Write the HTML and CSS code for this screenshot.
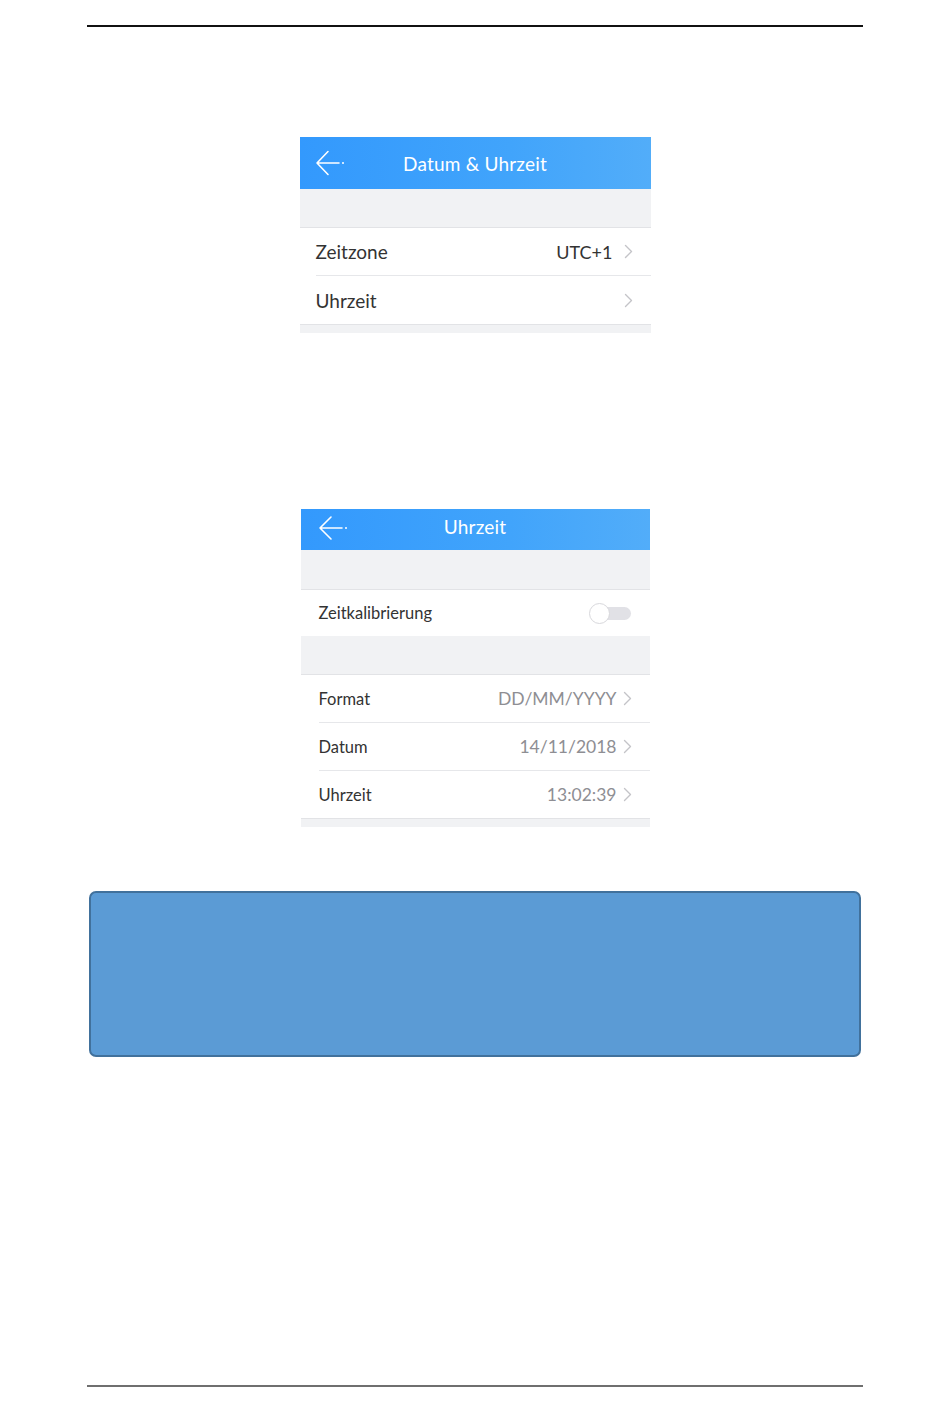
FILE: index.html
```html
<!DOCTYPE html>
<html lang="de">
<head>
<meta charset="UTF-8">
<meta name="viewport" content="width=device-width, initial-scale=1.0">
<title>Datum &amp; Uhrzeit</title>
<link rel="stylesheet" href="styles.css">
</head>
<body>

<div class="page">
    <hr class="rule rule-top">

    <!-- Screen 1: Datum & Uhrzeit -->
    <div class="phone phone-one">
        <div class="app-bar">
            <svg class="back" width="30" height="26" viewBox="0 0 30 26">
                <path d="M13 1.5 L2 13 L13 24.5 M2 13 L24 13" fill="none" stroke="#fff" stroke-width="1.6" stroke-linecap="round" stroke-linejoin="round"/>
                <circle cx="28" cy="13" r="1" fill="#fff"/>
            </svg>
            <span class="app-title">Datum &amp; Uhrzeit</span>
        </div>
        <div class="gap"></div>
        <ul class="list">
            <li class="row">
                <span class="label">Zeitzone</span>
                <span class="value dark">UTC+1</span>
                <svg class="chev" width="9" height="15" viewBox="0 0 9 15"><path d="M1.5 1.5 L7.5 7.5 L1.5 13.5" fill="none" stroke="#c4c4c8" stroke-width="1.4" stroke-linecap="round" stroke-linejoin="round"/></svg>
            </li>
            <li class="row">
                <span class="label">Uhrzeit</span>
                <svg class="chev" width="9" height="15" viewBox="0 0 9 15"><path d="M1.5 1.5 L7.5 7.5 L1.5 13.5" fill="none" stroke="#c4c4c8" stroke-width="1.4" stroke-linecap="round" stroke-linejoin="round"/></svg>
            </li>
        </ul>
        <div class="gap gap-end"></div>
    </div>

    <!-- Screen 2: Uhrzeit -->
    <div class="phone phone-two">
        <div class="app-bar">
            <svg class="back" width="30" height="26" viewBox="0 0 30 26">
                <path d="M13 2 L2 13 L13 24 M2 13 L24 13" fill="none" stroke="#fff" stroke-width="1.6" stroke-linecap="round" stroke-linejoin="round"/>
                <circle cx="28" cy="13" r="1" fill="#fff"/>
            </svg>
            <span class="app-title">Uhrzeit</span>
        </div>
        <div class="gap"></div>
        <ul class="list">
            <li class="row row-switch">
                <span class="label">Zeitkalibrierung</span>
                <span class="toggle"><span class="knob"></span></span>
            </li>
        </ul>
        <div class="gap"></div>
        <ul class="list">
            <li class="row">
                <span class="label">Format</span>
                <span class="value">DD/MM/YYYY</span>
                <svg class="chev" width="9" height="15" viewBox="0 0 9 15"><path d="M1.5 1.5 L7.5 7.5 L1.5 13.5" fill="none" stroke="#c4c4c8" stroke-width="1.4" stroke-linecap="round" stroke-linejoin="round"/></svg>
            </li>
            <li class="row">
                <span class="label">Datum</span>
                <span class="value">14/11/2018</span>
                <svg class="chev" width="9" height="15" viewBox="0 0 9 15"><path d="M1.5 1.5 L7.5 7.5 L1.5 13.5" fill="none" stroke="#c4c4c8" stroke-width="1.4" stroke-linecap="round" stroke-linejoin="round"/></svg>
            </li>
            <li class="row">
                <span class="label">Uhrzeit</span>
                <span class="value">13:02:39</span>
                <svg class="chev" width="9" height="15" viewBox="0 0 9 15"><path d="M1.5 1.5 L7.5 7.5 L1.5 13.5" fill="none" stroke="#c4c4c8" stroke-width="1.4" stroke-linecap="round" stroke-linejoin="round"/></svg>
            </li>
        </ul>
        <div class="gap gap-end"></div>
    </div>

    <div class="note-box"></div>

    <hr class="rule rule-bottom">
</div>

</body>
</html>
```

FILE: styles.css
```css
body {
    margin: 0;
    padding: 0;
    background-color: #fff;
    font-family: 'Lato', 'Noto Sans', sans-serif;
    color: #333;
}

.page {
    width: 950px;
    height: 1408px;
    padding-top: 25px;
    box-sizing: border-box;
    display: flex;
    flex-direction: column;
    align-items: center;
}

.rule {
    width: 776px;
    margin: 0;
    border: none;
    height: 2px;
}

.rule-top {
    background-color: #111;
}

.rule-bottom {
    margin-top: auto;
    margin-bottom: 21px;
    background-color: #6f6f6f;
}

/* phone screens */
.phone {
    background-color: #fff;
}

.phone-one {
    width: 351px;
    margin-top: 110px;
}

.phone-two {
    width: 349px;
    margin-top: 176px;
}

.app-bar {
    display: flex;
    align-items: center;
    justify-content: center;
    position: relative;
    background: linear-gradient(90deg, #3399fd 0%, #41a4fb 60%, #52adf9 100%);
    color: #fff;
}

.phone-one .app-bar {
    height: 52px;
}

.phone-two .app-bar {
    height: 41px;
}

.back {
    position: absolute;
    left: 15px;
    top: 50%;
    margin-top: -13px;
}

.phone-two .back {
    left: 17px;
    margin-top: -15px;
}

.phone-two .app-title {
    margin-top: -6px;
}

.app-title {
    font-size: 19px;
    letter-spacing: 0.2px;
}

.gap {
    height: 38px;
    background-color: #f1f2f4;
    border-bottom: 1px solid #e2e3e6;
}

.phone-two .app-bar + .gap {
    height: 39px;
}

.gap-end {
    height: 8px;
    border-bottom: none;
    border-top: 1px solid #e2e3e6;
}

.list {
    list-style-type: none;
    margin: 0;
    padding: 0;
}

.row {
    display: flex;
    align-items: center;
    height: 47px;
    margin-left: 16px;
    padding-right: 18px;
    border-bottom: 1px solid #e6e7ea;
}

.row:last-child {
    border-bottom: none;
    height: 48px;
}

.label {
    font-size: 19px;
    color: #333;
}

.phone-two .row {
    margin-left: 18px;
    height: 47px;
}

.phone-two .row-switch {
    height: 46px;
}

.phone-two .label {
    font-size: 16.5px;
}

.value {
    margin-left: auto;
    font-size: 17.5px;
    color: #8e8e93;
}

.value.dark {
    font-size: 18px;
    color: #333;
}

.chev {
    margin-left: 6px;
}

.phone-one .value + .chev {
    margin-left: 11px;
}

.row .label + .chev {
    margin-left: auto;
}

/* switch */
.toggle {
    margin-left: auto;
    margin-right: 1px;
    width: 40px;
    height: 13px;
    border-radius: 7px;
    background-color: #e1e1e6;
    position: relative;
}

.knob {
    position: absolute;
    left: -2px;
    top: -4px;
    width: 19px;
    height: 19px;
    border-radius: 50%;
    background-color: #fff;
    border: 1px solid #d8d8dc;
}

/* blue note box */
.note-box {
    width: 772px;
    height: 166px;
    margin-top: 64px;
    box-sizing: border-box;
    background-color: #5b9bd5;
    border: 2px solid #41719c;
    border-radius: 7px;
}
```
